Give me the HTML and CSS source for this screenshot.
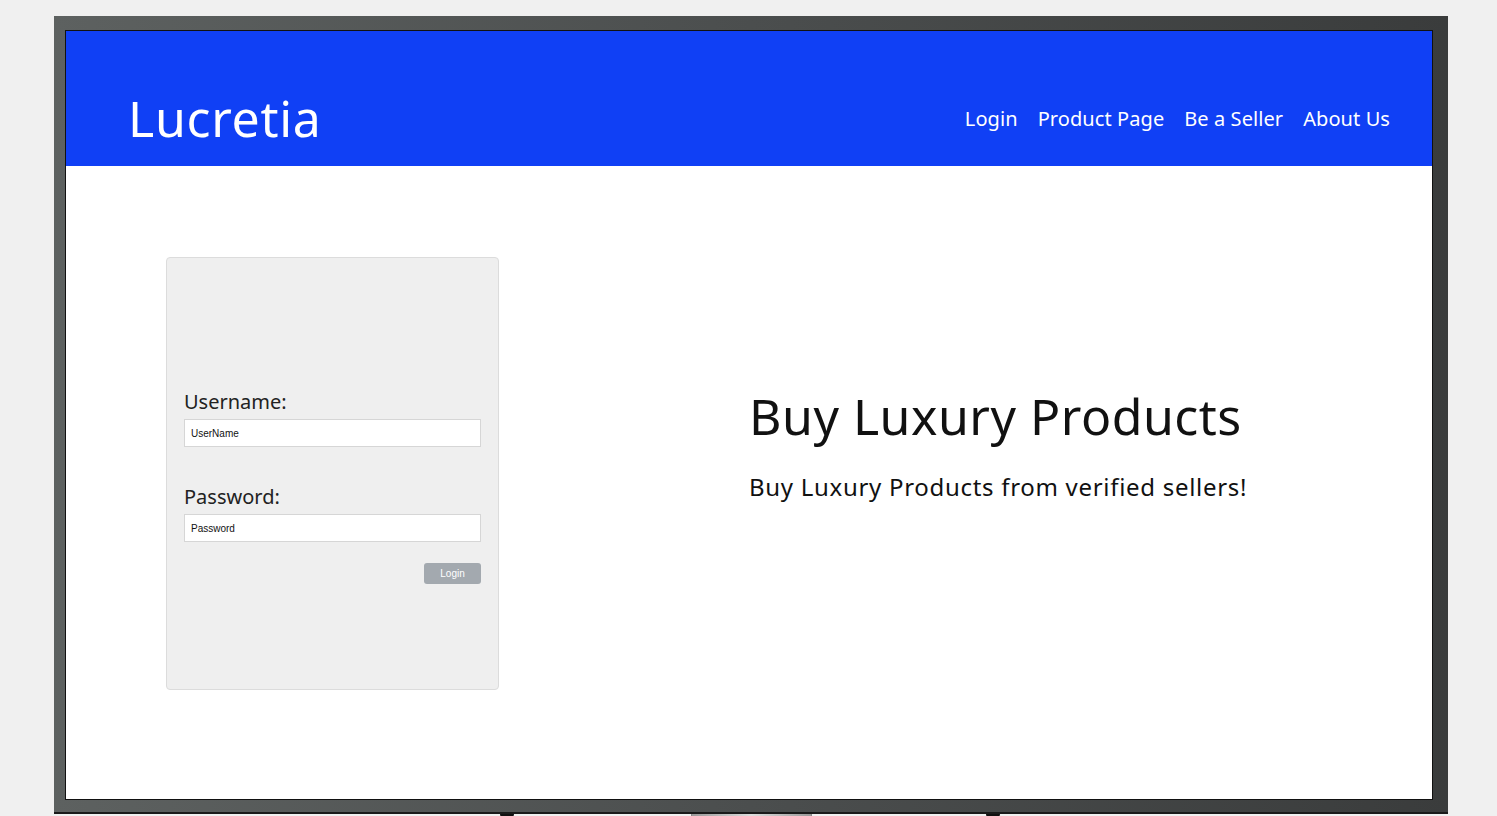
FILE: index.html
```html
<!DOCTYPE html>
<html lang="en">
<head>
<meta charset="utf-8">
<title>Lucretia</title>
<link rel="stylesheet" href="styles.css">
</head>
<body>
<div class="stage">
  <div class="tv">
    <div class="screen">
      <header class="topbar">
        <div class="logo">Lucretia</div>
        <nav class="nav">
          <a href="#">Login</a>
          <a href="#">Product Page</a>
          <a href="#">Be a Seller</a>
          <a href="#">About Us</a>
        </nav>
      </header>
      <main class="main">
        <form class="card">
          <label class="label" for="u">Username:</label>
          <input class="field" id="u" type="text" placeholder="UserName">
          <label class="label label-gap" for="p">Password:</label>
          <input class="field" id="p" type="password" placeholder="Password">
          <div class="actions"><button type="button" class="btn">Login</button></div>
        </form>
        <section class="hero">
          <h1 class="hero-title">Buy Luxury Products</h1>
          <p class="hero-sub">Buy Luxury Products from verified sellers!</p>
        </section>
      </main>
    </div>
  </div>
  <div class="base">
    <span class="foot"></span>
    <span class="stand"></span>
    <span class="foot"></span>
  </div>
</div>
</body>
</html>
```

FILE: styles.css
```css
html, body {
  margin: 0;
  padding: 0;
  background: #f0f0f0;
  height: 816px;
  overflow: hidden;
}
.stage {
  padding: 16px 0 0 54px;
  width: 1394px;
}
.tv {
  width: 1394px;
  height: 798px;
  box-sizing: border-box;
  padding: 14px 15px 12px 11px;
  background: linear-gradient(90deg, #5d6160 0%, #4b4e4e 50%, #3a3c3c 100%);
  border-bottom: 2px solid #1a1a1a;
}
.screen {
  height: 100%;
  box-sizing: border-box;
  border: 1px solid #111;
  background: #fff;
  font-family: "Noto Sans", "Noto Sans CJK JP", sans-serif;
  display: flex;
  flex-direction: column;
}
.topbar {
  height: 135px;
  background: #1040f5;
  display: flex;
  align-items: center;
  justify-content: space-between;
  padding: 0 42px 0 62px;
  color: #fff;
  flex: none;
}
.logo {
  font-size: 50px;
  line-height: 60px;
  margin-top: 39px;
  letter-spacing: 0.7px;
}
.nav {
  display: flex;
  gap: 20px;
  margin-top: 40px;
}
.nav a {
  color: #fff;
  text-decoration: none;
  font-size: 20px;
  line-height: 28px;
  letter-spacing: 0.08px;
}
.main {
  display: flex;
  padding: 91px 0 0 100px;
}
.card {
  width: 333px;
  height: 433px;
  box-sizing: border-box;
  background: #efefef;
  border: 1px solid #dcdcdc;
  border-radius: 4px;
  padding: 131px 17px 0 17px;
  display: flex;
  flex-direction: column;
}
.label {
  font-size: 20px;
  color: #222;
  line-height: 26px;
  margin-bottom: 4px;
}
.label-gap {
  margin-top: 37px;
}
.field {
  height: 28px;
  box-sizing: border-box;
  border: 1px solid #d6d6d6;
  background: #fff;
  padding: 0 6px;
  font-family: "Liberation Sans", Arial, sans-serif;
  font-size: 10px;
  outline: none;
}
.field::placeholder {
  color: #111;
}
.actions {
  display: flex;
  justify-content: flex-end;
  margin-top: 21px;
}
.btn {
  width: 57px;
  height: 21px;
  border: none;
  border-radius: 3px;
  background: #a3a9af;
  color: #fff;
  font-family: "Liberation Sans", Arial, sans-serif;
  font-size: 10px;
  padding: 0;
}
.hero {
  margin-left: 250px;
  padding-top: 129px;
}
.hero-title {
  margin: 0;
  font-weight: 400;
  font-size: 50px;
  line-height: 60px;
  color: #111;
  letter-spacing: 0.5px;
}
.hero-sub {
  margin: 26px 0 0;
  font-size: 24px;
  line-height: 30px;
  color: #111;
  letter-spacing: 0.7px;
}
.base {
  position: relative;
  height: 4px;
  width: 1394px;
}
.foot {
  position: absolute;
  top: 0;
  width: 14px;
  height: 3px;
  background: #111;
  border-radius: 0 0 4px 4px;
}
.foot:first-child { left: 446px; }
.foot:last-child { left: 932px; }
.stand {
  position: absolute;
  left: 637px;
  top: 0;
  width: 119px;
  height: 4px;
  background: linear-gradient(90deg, #999, #ddd 50%, #999);
  border-left: 1px solid #888;
  border-right: 1px solid #888;
}
```
